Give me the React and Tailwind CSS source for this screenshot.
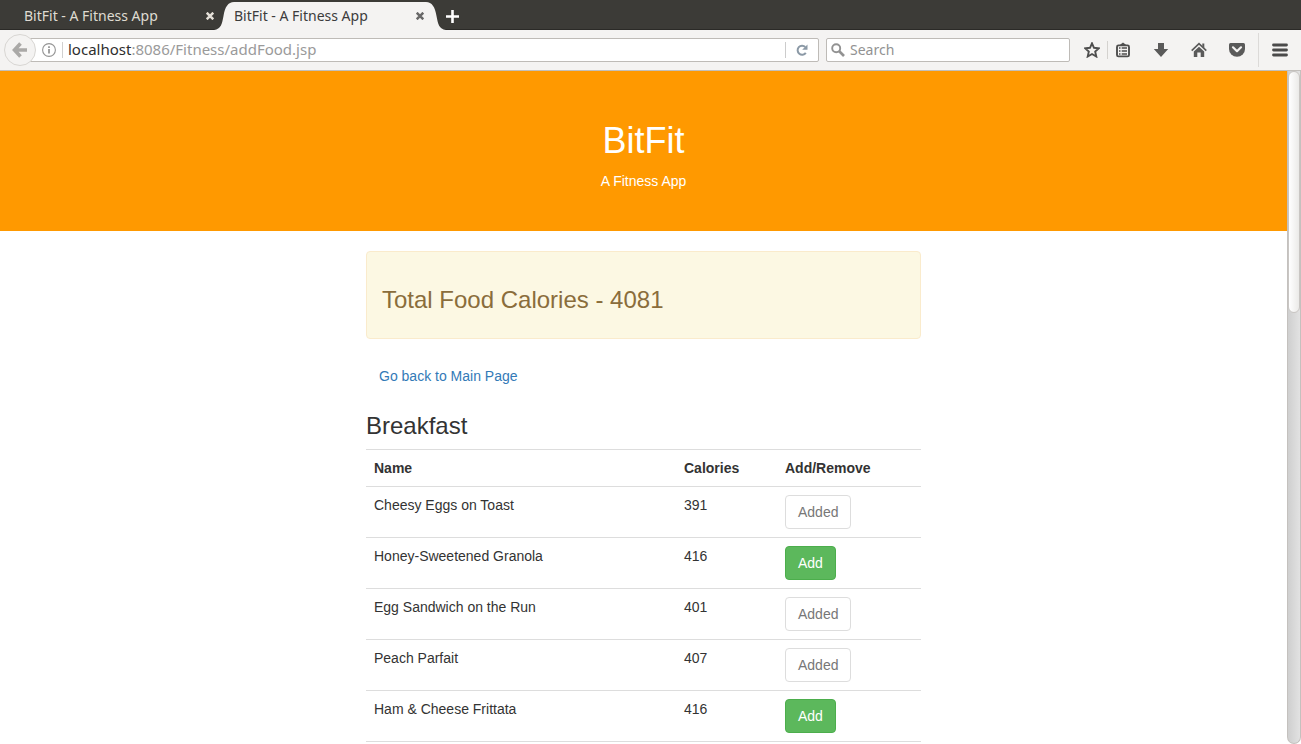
import React from "react";

const foods = [
  { name: "Cheesy Eggs on Toast", calories: 391, added: true },
  { name: "Honey-Sweetened Granola", calories: 416, added: false },
  { name: "Egg Sandwich on the Run", calories: 401, added: true },
  { name: "Peach Parfait", calories: 407, added: true },
  { name: "Ham & Cheese Frittata", calories: 416, added: false },
];

function CloseIcon({ className }) {
  return (
    <svg viewBox="0 0 8 8" className={`size-2 ${className}`} aria-hidden="true">
      <path d="M.7 .7l6.600 6.600M7.300 .7l-6.600 6.600" stroke="currentColor" strokeWidth="2.500" />
    </svg>
  );
}

function TabBar() {
  return (
    <div className="flex h-[30px] shrink-0 items-end border-b border-[#2b2a27] bg-[#3c3b37]">
      <div className="-mb-px flex h-7 w-[214px] items-center pl-6">
        <button type="button" className="w-[182px] text-left text-[#dfdbd2]">
          BitFit - A Fitness App
        </button>
        <button type="button" aria-label="Close tab">
          <CloseIcon className="text-[#e4e0d8]" />
        </button>
      </div>
      <div className="-mb-px flex h-7 items-center text-[#3c3c3c]">
        <svg viewBox="0 0 20 28" className="h-7 w-5" aria-hidden="true">
          <path d="M0 28C7 27 8 22 9.500 14C11 5 14 0 20 0V28Z" fill="#f4f3f2" />
        </svg>
        <div className="flex h-7 w-[192px] items-center bg-[#f4f3f2]">
          <button type="button" className="w-[182px] text-left">
            BitFit - A Fitness App
          </button>
          <button type="button" aria-label="Close tab">
            <CloseIcon className="text-[#686868]" />
          </button>
        </div>
        <svg viewBox="0 0 20 28" className="h-7 w-5" aria-hidden="true">
          <path d="M20 28C13 27 12 22 10.500 14C9 5 6 0 0 0V28Z" fill="#f4f3f2" />
        </svg>
      </div>
      <button type="button" aria-label="Open a new tab" className="-mb-px flex h-7 items-center">
        <svg viewBox="0 0 13 13" className="size-[13px]" aria-hidden="true">
          <path d="M6.500 0v13M0 6.500h13" stroke="#fff" strokeWidth="2.600" />
        </svg>
      </button>
    </div>
  );
}

function ToolButton({ label, children }) {
  return (
    <button type="button" aria-label={label} className="flex size-4 items-center justify-center">
      <svg viewBox="0 0 16 16" className="size-4" fill="none" aria-hidden="true">
        {children}
      </svg>
    </button>
  );
}

function Toolbar() {
  return (
    <div className="flex h-[41px] shrink-0 items-center border-b border-[#c2bfbb] bg-[#f4f3f2] pr-[13px] pl-1 text-[15px]">
      <button
        type="button"
        aria-label="Back"
        className="z-10 flex size-8 shrink-0 items-center justify-center rounded-full border border-[#d8d6d3] bg-[#f4f3f2]"
      >
        <svg viewBox="0 0 16 16" className="size-4" fill="none" aria-hidden="true">
          <path d="M8.500 1.500L2.500 8l6 6.500M3 8h12" stroke="#aaa9a7" strokeWidth="3.600" />
        </svg>
      </button>
      <div className="-ml-3 flex h-6 min-w-0 flex-1 items-center rounded-xs border border-[#bebbb7] bg-white pl-[17px]">
        <svg viewBox="0 0 14 14" className="size-[14px] shrink-0" fill="none" aria-hidden="true">
          <circle cx="7" cy="7" r="6.400" stroke="#949494" strokeWidth="1.100" />
          <path d="M7 6v4.500M7 3.300v1.600" stroke="#8a8a8a" strokeWidth="1.600" />
        </svg>
        <span className="mr-[5px] ml-[6px] h-4 w-px bg-[#d0d0d0]" />
        <a href="#address" className="min-w-0 flex-1 truncate text-[#9a9a9a]">
          <span className="text-[#2e2e2e]">localhost</span>:8086/Fitness/addFood.jsp
        </a>
        <span className="h-4 w-px bg-[#cccccc]" />
        <button type="button" aria-label="Reload" className="flex w-8 justify-center">
          <svg viewBox="0 0 12 12" className="size-3" fill="none" aria-hidden="true">
            <path d="M9.800 8.800A4.500 4.500 0 1 1 9.300 3" stroke="#8b99a6" strokeWidth="2" />
            <path d="M11.500 .5v5.300H6.200Z" fill="#8b99a6" />
          </svg>
        </button>
      </div>
      <label className="ml-[7px] flex h-6 w-[244px] shrink-0 items-center gap-[5px] rounded-xs border border-[#bebbb7] bg-white pl-1">
        <svg viewBox="0 0 14 14" className="size-[14px] shrink-0" fill="none" aria-hidden="true">
          <circle cx="5.200" cy="5.200" r="4" stroke="#929292" strokeWidth="1.900" />
          <path d="M8 8l5 5" stroke="#929292" strokeWidth="2.600" />
        </svg>
        <input
          type="text"
          aria-label="Search"
          placeholder="Search"
          className="min-w-0 flex-1 bg-transparent text-sm outline-none placeholder:text-[#929292]"
        />
      </label>
      <div className="ml-[14px] flex h-full items-center">
        <ToolButton label="Bookmark this page">
          <path
            d="M8 1.300l2 4.500 4.900.500-3.700 3.300 1.100 4.900L8 12l-4.300 2.500 1.100-4.900L1.100 6.300 6 5.800Z"
            stroke="#4e4e4e"
            strokeWidth="1.900"
          />
        </ToolButton>
        <span className="mx-[7px] h-[18px] w-px bg-[#d4d2cf]" />
        <div className="flex gap-[22px]">
          <ToolButton label="Show bookmarks">
            <path d="M4.500 3.200L8 .500l3.500 2.700Z" fill="#4e4e4e" />
            <rect x="2" y="3.400" width="12" height="11" rx="1.500" stroke="#4e4e4e" strokeWidth="1.900" />
            <path d="M4 6h1.500M4 9h1.500M4 12h1.500M6.700 6H12M6.700 9H12M6.700 12H12" stroke="#4e4e4e" strokeWidth="1.300" />
          </ToolButton>
          <ToolButton label="Downloads">
            <path d="M5 1h6v6h4.200L8 15 .800 7H5Z" fill="#5a5a5a" />
          </ToolButton>
          <ToolButton label="Home">
            <path d="M.700 8.700L8 1.700l7.300 7" stroke="#5a5a5a" strokeWidth="1.700" />
            <path d="M11.300 1.500h2V6l-2-2Z" fill="#5a5a5a" />
            <path d="M8 4.700l5.200 4.900V15H9.700v-4.500H6.300V15H2.800V9.600Z" fill="#5a5a5a" />
          </ToolButton>
          <ToolButton label="Save to Pocket">
            <path d="M1.500 1h13Q16 1 16 2.500V7A8 7.800 0 0 1 0 7V2.500Q0 1 1.500 1Z" fill="#5a5a5a" />
            <path d="M4 5.300l4 3.900 4-3.900" stroke="#f4f3f2" strokeWidth="2.200" strokeLinecap="round" strokeLinejoin="round" />
          </ToolButton>
        </div>
        <span className="mx-[13px] h-[34px] w-px bg-[#dcdad8]" />
        <ToolButton label="Open menu">
          <path d="M1.500 3h13M1.500 8h13M1.500 13h13" stroke="#4a4a4a" strokeWidth="2.800" strokeLinecap="round" />
        </ToolButton>
      </div>
    </div>
  );
}

function FoodTable() {
  return (
    <table className="w-full border-collapse text-left" aria-labelledby="meal">
      <thead>
        <tr className="border-t border-[#dddddd]">
          <th className="w-[310px] p-2">Name</th>
          <th className="w-[101px] p-2">Calories</th>
          <th className="p-2">Add/Remove</th>
        </tr>
      </thead>
      <tbody>
        {foods.map((food) => (
          <tr key={food.name} className="border-y border-[#dddddd] align-top">
            <td className="p-2">{food.name}</td>
            <td className="p-2">{food.calories}</td>
            <td className="p-2">
              {food.added ? (
                <button
                  type="button"
                  disabled
                  className="block rounded-sm border border-[#dddddd] bg-white px-3 py-[6px] text-[#777777]"
                >
                  Added
                </button>
              ) : (
                <button
                  type="button"
                  className="block rounded-sm border border-[#4cae4c] bg-[#5cb85c] px-3 py-[6px] text-white"
                >
                  Add
                </button>
              )}
            </td>
          </tr>
        ))}
      </tbody>
    </table>
  );
}

export default function App() {
  return (
    <div className="flex h-screen flex-col overflow-hidden bg-white">
      <div className="shrink-0 font-['Noto_Sans',sans-serif] text-sm">
        <TabBar />
        <Toolbar />
      </div>
      <div className="flex min-h-0 flex-1">
        <main className="min-w-0 flex-1 overflow-hidden font-['Liberation_Sans',Arial,sans-serif] text-sm leading-5 text-[#333333]">
          <header className="bg-[#ff9900] pt-[50px] pb-10 text-center text-white">
            <h1 className="mb-[10px] text-4xl leading-10">BitFit</h1>
            <p>A Fitness App</p>
          </header>
          <div className="mx-auto max-w-[555px]">
            <div className="my-5 rounded-sm border border-[#faebcc] bg-[#fcf8e3] px-[15px] pt-[35px] pb-[25px] text-[#8a6d3b]">
              <h3 className="text-2xl leading-[26px]">Total Food Calories - 4081</h3>
            </div>
            <a href="#main" className="inline-block px-[13px] py-[7px] align-top text-[#337ab7]">
              Go back to Main Page
            </a>
            <h3 id="meal" className="mt-5 mb-[10px] text-2xl leading-[26px]">
              Breakfast
            </h3>
            <FoodTable />
          </div>
        </main>
        <div
          aria-hidden="true"
          className="w-[14px] shrink-0 rounded-b-full border-x border-b border-[#c4c1be] bg-linear-to-r from-[#cfcfcf] to-[#e2e2e2]"
        >
          <div className="h-[36%] rounded-full border border-[#c9c6c3] bg-linear-to-r from-white to-[#ebeae8]" />
        </div>
      </div>
    </div>
  );
}
